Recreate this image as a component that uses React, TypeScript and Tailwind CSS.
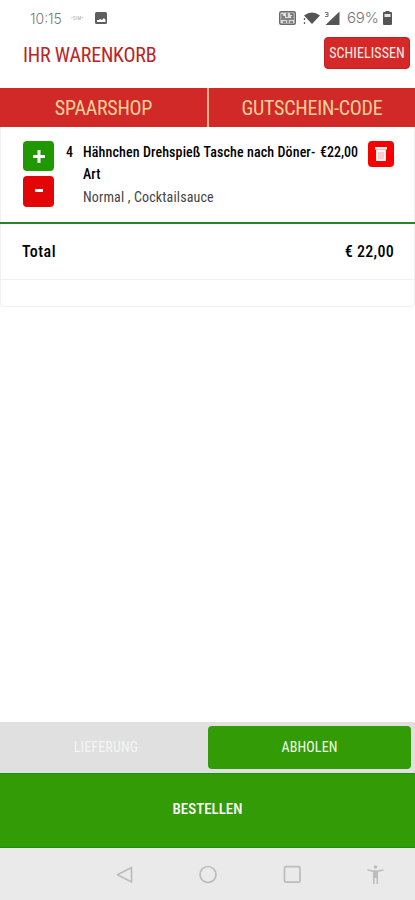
import React from 'react';

const StatusBar: React.FC = () => (
    <div className="flex h-9 items-center pl-[30px] pr-[22px] text-[#777]">
        <span className="w-[41px] whitespace-nowrap font-['Inter'] text-[14px] font-light">10:15</span>
        <span className="w-[24px] text-[5px] leading-none tracking-[0.3px] text-[#aaa]">•SIM•</span>
        <svg className="h-3 w-3" viewBox="0 0 12 12">
            <rect width="12" height="12" rx="1.5" fill="#5e5e5e" />
            <path d="M2 10V8h2l1-1 2 1 2-2 1.500 2v2z" fill="#fff" />
        </svg>
        <svg className="ml-auto h-4 w-[62px]" viewBox="0 0 62 16">
            <rect x="1.700" y="1.700" width="15.600" height="12.600" rx="1.500" fill="#ddd" stroke="#686868" strokeWidth="1.400" />
            <path d="M4 4v3h3M9 3v4M12 4h3v3h-2M3 9h13M5 12h3M10 10v3M12 12h3" fill="none" stroke="#666" strokeWidth="1.300" />
            <path d="M26 5.500Q34 -.500 42 5.500L34 14Z" fill="#555" />
            <path d="M26.500 8v2M26.500 12v2" stroke="#666" strokeWidth="1.300" />
            <path d="M61.500 1.500V15H47.500z" fill="#555" />
            <path d="M47 2.500h3v4h-3M48 4.500h2" fill="none" stroke="#777" />
        </svg>
        <span className="ml-[7px] w-[34px] whitespace-nowrap font-['Inter'] text-[15px] font-light tracking-[-0.2px]">69%</span>
        <svg className="ml-[1px] h-4 w-[11px]" viewBox="0 0 11 16">
            <path d="M1 3q0-1 1-1h1.500V1h4v1H9q1 0 1 1v11q0 1-1 1H2q-1 0-1-1z" fill="#555" />
            <path d="M2.500 4h6v3h-6z" fill="#e4e4e4" />
        </svg>
    </div>
);

const Header: React.FC = () => (
    <header className="flex h-[52px] items-start justify-between pl-[23px] pr-[5px]">
        <h1 className="mt-[5px] text-[20px] leading-[28px] tracking-[-0.2px] text-[#b92425]">IHR WARENKORB</h1>
        <button className="mt-[1px] h-8 w-[86px] whitespace-nowrap rounded-[4px] border border-[#c51f21] bg-[#d42829] text-[14px] tracking-[0.1px] text-[#fff0e6]">
            SCHIELISSEN
        </button>
    </header>
);

const Tabs: React.FC = () => (
    <div className="flex h-[39px] bg-[#d12928] text-[20px] tracking-[-0.25px] text-[#fbd09a]">
        <button className="w-[207px]">SPAARSHOP</button>
        <div className="w-[2px] bg-[#f4b18b]" />
        <button className="flex-1">GUTSCHEIN-CODE</button>
    </div>
);

const CartItem: React.FC = () => (
    <div className="flex h-[95px] pl-[22px] text-[14px] leading-[22px] text-black">
        <div className="flex w-[43px] flex-col gap-[5px] pt-[14px]">
            <button className="flex h-[30px] w-[31px] items-center justify-center rounded-[4px] bg-[#209800]">
                <svg className="h-4 w-4" viewBox="0 0 16 16">
                    <path d="M8 2v13M2 8.500h12" stroke="#fff" strokeWidth="3" />
                </svg>
            </button>
            <button className="flex h-[31px] w-[31px] items-center justify-center rounded-[4px] bg-[#e20606]">
                <span className="mb-[2px] h-[3px] w-2 bg-white" />
            </button>
        </div>
        <span className="w-[17px] pt-[14px] font-medium">4</span>
        <div className="w-[237px] whitespace-nowrap pt-[14px]">
            <p className="font-medium tracking-[0.11px]">Hähnchen Drehspieß Tasche nach Döner-<br />Art</p>
            <p className="mt-[1px] tracking-[0.15px] text-[#444]">Normal , Cocktailsauce</p>
        </div>
        <span className="w-[48px] pt-[14px] font-medium">€22,00</span>
        <button className="mt-[14px] flex h-[26px] w-[26px] items-center justify-center rounded-[4px] bg-[#f60000]">
            <svg className="h-4 w-3" viewBox="0 0 12 16">
                <path d="M0 1h12v2.500H0zM1 3h10v12H1z" fill="#fff0f0" />
                <path d="M1 3.500h10" stroke="#f3a3a3" strokeWidth=".7" />
                <path d="M4 6v7M6 6v7M8 6v7" stroke="#e99" strokeWidth=".8" />
            </svg>
        </button>
    </div>
);

const App: React.FC = () => (
    <div className="flex h-[900px] w-[415px] flex-col overflow-hidden bg-white font-['Roboto_Condensed','Roboto',sans-serif] [font-stretch:75%]">
        <StatusBar />
        <Header />
        <Tabs />
        <section className="h-[180px] rounded-b-[4px] border-x border-b border-[#f0f0f0]">
            <CartItem />
            <div className="-mx-px flex h-[57px] items-center justify-between border-t-2 border-[#29842a] pl-[22px] pr-[21px] text-[16px] font-medium text-black">
                <span className="tracking-[0.5px]">Total</span>
                <span className="tracking-[0.3px]">€ 22,00</span>
            </div>
            <div className="border-t border-[#f0f0f0]" />
        </section>
        <footer className="mt-auto">
            <div className="flex h-[51px] bg-[#e0e0e0] pt-1 text-[14px]">
                <button className="h-[43px] w-[208px] pl-1 tracking-[0.15px] text-[#f5f5f5]">LIEFERUNG</button>
                <button className="h-[43px] w-[203px] rounded-[4px] bg-[#329b05] tracking-[0.15px] text-[#f0ffe9]">ABHOLEN</button>
            </div>
            <button className="block h-[75px] w-full border-y border-[#159315] bg-[#329b05] pb-[2px] text-[15px] font-medium text-white">BESTELLEN</button>
            <nav className="flex h-[52px] items-center bg-[#eaeaea] pl-[116px]">
                <svg className="mt-[2px] h-5 w-[269px]" viewBox="0 0 269 20" fill="none" stroke="#bcbcbc" strokeWidth="1.700">
                    <path d="M15.500 2.500v14.500L1.500 9.700z" strokeLinejoin="round" />
                    <circle cx="92" cy="9.500" r="8" />
                    <rect x="168.500" y="1.700" width="15.500" height="15.500" rx="1.500" />
                    <circle cx="259.500" cy="2" r="1.700" fill="#bcbcbc" stroke="none" />
                    <path d="M251.500 5l5 1h6l5-1" />
                    <path d="M257 6h5V19h-1.500v-6h-2v6H257z" fill="#bcbcbc" stroke="none" />
                </svg>
            </nav>
        </footer>
    </div>
);

export default App;
